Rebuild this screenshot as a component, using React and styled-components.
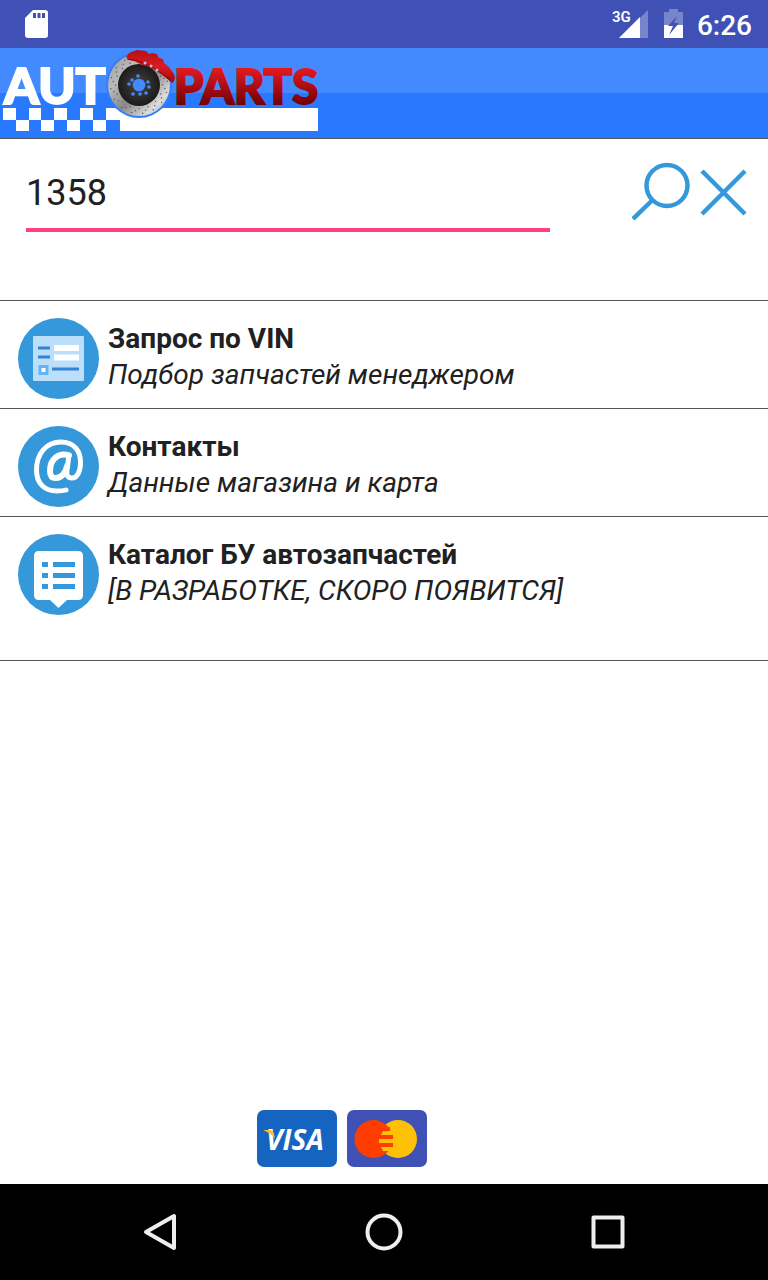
import React, { useState } from "react";
import styled, { createGlobalStyle } from "styled-components";

const GlobalStyle = createGlobalStyle`
  * { box-sizing: border-box; }
  body {
    margin: 0;
    background: #fff;
    color: #212121;
    font-family: Roboto, "Liberation Sans", sans-serif;
  }
`;

const Screen = styled.div`
  display: flex;
  flex-direction: column;
  min-height: 100vh;
`;

const StatusBar = styled.div`
  display: flex;
  align-items: center;
  justify-content: space-between;
  height: 48px;
  padding: 0 16px 0 24px;
  background: #3f51b5;
  color: #fff;
`;

const StatusGroup = styled.div`
  display: flex;
  align-items: center;
  gap: 16px;
`;

const Clock = styled.time`
  font-size: 28px;
  font-weight: 500;
  line-height: 44px;
  margin-left: -2px;
  padding-top: 4px;
`;

const Header = styled.header`
  height: 91px;
  border-bottom: 1px solid #555;
  background: linear-gradient(#448aff 50%, #2979ff 50%);
`;

const Icon = styled.svg`
  display: block;
  flex: none;
`;

const Main = styled.main`
  flex: 1;
  display: flex;
  flex-direction: column;
`;

const SearchForm = styled.form`
  display: flex;
  align-items: flex-start;
  gap: 82px;
  height: 162px;
  padding: 21px 20px 0 26px;
  border-bottom: 1px solid #555;
`;

const SearchInput = styled.input`
  flex: 1;
  min-width: 0;
  height: 72px;
  padding: 0 0 2px;
  border: 0;
  border-bottom: 4px solid #ff4081;
  outline: none;
  background: none;
  color: #212121;
  font: 400 36px/48px Roboto, "Liberation Sans", sans-serif;
`;

const Actions = styled.div`
  display: flex;
  gap: 8px;
`;

const IconButton = styled.button`
  display: flex;
  align-items: center;
  justify-content: center;
  padding: 0;
  border: 0;
  background: none;
  color: #3498db;
  cursor: pointer;
`;

const Menu = styled.ul`
  margin: 0;
  padding: 0;
  list-style: none;
`;

const MenuItem = styled.li`
  border-bottom: 1px solid #555;
  padding-bottom: ${(p) => (p.$tall ? "36px" : "0")};
`;

const MenuLink = styled.a`
  display: flex;
  gap: 9px;
  padding: 17px 18px 9px;
  color: inherit;
  text-decoration: none;
`;

const MenuText = styled.span`
  display: flex;
  flex-direction: column;
  padding-top: 3px;
  font-size: 28px;
  line-height: 36px;
`;

const Title = styled.strong`
  font-weight: 700;
`;

const Subtitle = styled.em`
  font-style: italic;
`;

const Payments = styled.footer`
  display: flex;
  justify-content: center;
  gap: 10px;
  margin-top: auto;
  padding: 24px 84px 17px 0;
`;

const NavBar = styled.nav`
  display: grid;
  grid-template-columns: repeat(3, 1fr);
  height: 96px;
  padding: 0 48px;
  background: #000;
`;

const NavButton = styled(IconButton)`
  color: #eee;
`;

const holes = [
  [138, 28], [148, 34], [132, 32], [129, 36],
  [149, 39], [146, 45], [140, 46], [133, 46],
];

const vents = Array.from({ length: 48 }, (_, i) => {
  const angle = (i / 48) * Math.PI * 2;
  const radius = 23.5 + (i % 3) * 2.5;
  return [139 + Math.cos(angle) * radius, 37 + Math.sin(angle) * radius];
});

function Logo() {
  return (
    <Icon width="320" height="90" viewBox="0 0 320 90" role="img" aria-label="Auto Parts">
      <defs>
        <linearGradient id="red" x1="0" y1="22" x2="0" y2="58" gradientUnits="userSpaceOnUse">
          <stop offset="0" stopColor="#e0181f" />
          <stop offset="1" stopColor="#6c0003" />
        </linearGradient>
        <linearGradient id="steel" x1="0" y1="0" x2="1" y2="1">
          <stop offset="0" stopColor="#999" />
          <stop offset=".3" stopColor="#bbb" />
          <stop offset=".55" stopColor="#888" />
          <stop offset=".8" stopColor="#ddd" />
          <stop offset="1" stopColor="#999" />
        </linearGradient>
        <radialGradient id="hub">
          <stop offset="0" stopColor="#484444" />
          <stop offset="1" stopColor="#1c1a1a" />
        </radialGradient>
        <linearGradient id="caliper" x1="0" y1="0" x2="0" y2="1">
          <stop offset="0" stopColor="#b80f15" />
          <stop offset=".5" stopColor="#d91c22" />
          <stop offset="1" stopColor="#a0070b" />
        </linearGradient>
      </defs>
      <path
        fill="#fff"
        d="M3 60h13v12H3zM29 60h12v12H29zM54 60h13v12H54zM80 60h13v12H80zM16 72h13v11H16zM41 72h13v11H41zM67 72h13v11H67zM93 72h13v11H93zM106 60h212v23H120V72h-14z"
      />
      <g fontFamily='Lato, "Liberation Sans", sans-serif' fontWeight="900" strokeWidth="2">
        <text x="4" y="56" fontSize="50" fill="#fff" stroke="#fff">AUT</text>
        <text x="174" y="56" fontSize="47" fill="url(#red)" stroke="url(#red)">PARTS</text>
      </g>
      <circle cx="139" cy="37" r="33" fill="#2f7fff" />
      <circle cx="139" cy="37" r="31" fill="url(#steel)" />
      {vents.map(([x, y]) => (
        <circle key={`${x}-${y}`} cx={x} cy={y} r=".7" fill="#555" />
      ))}
      <circle cx="139" cy="37" r="21" fill="url(#hub)" />
      <circle cx="139" cy="37" r="6.3" fill="#448aff" />
      {holes.map(([x, y]) => (
        <circle key={`${x}-${y}`} cx={x} cy={y} r="1.8" fill="#448aff" />
      ))}
      <path
        fill="url(#caliper)"
        d="M126 9l3-4 5-2 3-1 9 1 3 3 3-1 5 1 2 4 4 1 1 4 5 4 5 7 1 4-2 5c-5-3-10-8-15-11l-8-5-8-2-8-4-5-1z"
      />
      <path fill="none" stroke="#8a0508" d="M127 11c8 1 13 2 20 6 9 4 16 9 25 17" />
      <g fill="#a9c4ee">
        <circle cx="145" cy="15" r="1.5" />
        <circle cx="151" cy="18" r="1.5" />
        <circle cx="157" cy="22" r="1.5" />
      </g>
    </Icon>
  );
}

function FormIcon() {
  return (
    <Icon width="81" height="81" viewBox="0 0 81 81" aria-hidden="true">
      <circle cx="40.5" cy="40.5" r="40.5" fill="#3498db" />
      <rect x="15" y="18" width="51" height="45" rx="1" fill="#bbdefb" />
      <path fill="#3583d6" d="M20 28.500h12v3H20zM20 37.500h12v3H20zM34 49.500h27v3H34z" />
      <path fill="#fff" d="M36 27h25v6H36zM36 36.500h25v6H36z" />
      <rect x="22" y="48.500" width="7" height="7" fill="#fff" stroke="#64b5f6" strokeWidth="3" />
    </Icon>
  );
}

function ContactIcon() {
  return (
    <Icon width="81" height="81" viewBox="0 0 81 81" aria-hidden="true">
      <circle cx="40.500" cy="40.500" r="40.500" fill="#3498db" />
      <g fill="none" stroke="#fff" strokeLinecap="round">
        <path
          strokeWidth="5"
          d="M48 64C45 65 43 65 39 65C26 65 18.500 57 18.500 44C18.500 28 28 16 43 16C56 16 62.500 25 62.500 36C62.500 46 59 52 54 52C50 52 48 49 49 44L51 29"
        />
        <path strokeWidth="6" d="M51 29.500C41 26 32 33 32 45C32 50 34 52 38 52C44 52 48 46 49 40" />
      </g>
    </Icon>
  );
}

function CatalogIcon() {
  return (
    <Icon width="81" height="81" viewBox="0 0 81 81" aria-hidden="true">
      <circle cx="40.500" cy="40.500" r="40.500" fill="#3498db" />
      <path
        fill="#fff"
        d="M21 17h39q5 0 5 5v39q0 5-5 5H49l-8.500 8L32 66H21q-5 0-5-5V22q0-5 5-5z"
      />
      <path
        fill="#3498db"
        d="M24 28h6v5h-6zM35 28h22v5H35zM24 39h6v5h-6zM35 39h22v5H35zM24 50h6v5h-6zM35 50h22v5H35z"
      />
    </Icon>
  );
}

function VisaCard() {
  return (
    <Icon width="80" height="57" viewBox="0 0 80 57" role="img" aria-label="Visa">
      <rect width="80" height="57" rx="7" fill="#1565c0" />
      <text
        x="9"
        y="40"
        fill="#fff"
        fontFamily='"Open Sans", "Noto Sans", sans-serif'
        fontSize="28"
        fontStyle="italic"
        fontWeight="700"
      >
        VISA
      </text>
      <path fill="#fbc02d" d="M6 20h7q3 0 4 4l1 5q-4-6-12-9z" />
    </Icon>
  );
}

function MasterCard() {
  return (
    <Icon width="80" height="57" viewBox="0 0 80 57" role="img" aria-label="Mastercard">
      <rect width="80" height="57" rx="7" fill="#3f51b5" />
      <circle cx="51" cy="29" r="19" fill="#ffc107" />
      <circle cx="26.500" cy="29" r="19" fill="#ff3d00" />
      <path fill="#ffc107" d="M36 21h9v4H34zM32 29h14v4H32zM34 37h11v4H36z" />
      <path fill="#ff3d00" d="M38 17h5v4h-5zM38 25h8v4h-8zM38 33h8v4h-8z" />
    </Icon>
  );
}

const items = [
  { title: "Запрос по VIN", subtitle: "Подбор запчастей менеджером", Picture: FormIcon },
  { title: "Контакты", subtitle: "Данные магазина и карта", Picture: ContactIcon },
  { title: "Каталог БУ автозапчастей", subtitle: "[В РАЗРАБОТКЕ, СКОРО ПОЯВИТСЯ]", Picture: CatalogIcon, tall: true },
];

export default function App() {
  const [query, setQuery] = useState("1358");

  return (
    <Screen>
      <GlobalStyle />
      <StatusBar>
        <Icon width="24" height="28" viewBox="0 0 24 28" aria-hidden="true">
          <path fill="#fff" d="M9 0h12q3 0 3 3v22q0 3-3 3H4q-3 0-3-3V8z" />
          <path fill="#3f51b5" d="M9 3h3v5H9zM13.500 3h3v5h-3zM18 3h3v5h-3z" />
        </Icon>
        <StatusGroup>
          <Icon width="36" height="30" viewBox="0 0 36 30" role="img" aria-label="3G">
            <path fill="#fff" fillOpacity=".3" d="M36 1v28H7z" />
            <path fill="#fff" d="M28 8v21H7z" />
            <text x="0" y="13" fill="#fff" fontSize="15" fontWeight="600">3G</text>
          </Icon>
          <Icon width="19" height="30" viewBox="0 0 19 30" aria-hidden="true">
            <path fill="#fff" fillOpacity=".3" d="M5 0h9v3h5v13H0V3h5z" />
            <path fill="#fff" d="M0 16h19v13H0z" />
            <path fill="#3f51b5" d="M13 7L4 17h5l-4 9 10-12h-5z" />
          </Icon>
          <Clock>6:26</Clock>
        </StatusGroup>
      </StatusBar>

      <Header>
        <Logo />
      </Header>

      <Main>
        <SearchForm onSubmit={(e) => e.preventDefault()}>
          <SearchInput
            aria-label="Номер детали"
            value={query}
            onChange={(e) => setQuery(e.target.value)}
          />
          <Actions>
            <IconButton type="submit" aria-label="Найти">
              <Icon width="60" height="64" viewBox="0 0 60 64" fill="none" stroke="currentColor" strokeWidth="4.500">
                <circle cx="35" cy="25.500" r="20.500" />
                <path d="M20 40.500L1 59" />
              </Icon>
            </IconButton>
            <IconButton type="button" aria-label="Очистить" onClick={() => setQuery("")}>
              <Icon width="48" height="64" viewBox="0 0 48 64" fill="none" stroke="currentColor" strokeWidth="4.500">
                <path d="M2 11l43 43M45 11L2 54" />
              </Icon>
            </IconButton>
          </Actions>
        </SearchForm>

        <Menu>
          {items.map(({ title, subtitle, Picture, tall }) => (
            <MenuItem key={title} $tall={tall}>
              <MenuLink href="#">
                <Picture />
                <MenuText>
                  <Title>{title}</Title>
                  <Subtitle>{subtitle}</Subtitle>
                </MenuText>
              </MenuLink>
            </MenuItem>
          ))}
        </Menu>

        <Payments>
          <VisaCard />
          <MasterCard />
        </Payments>
      </Main>

      <NavBar>
        <NavButton type="button" aria-label="Назад">
          <Icon width="40" height="40" viewBox="0 0 40 40" fill="none" stroke="currentColor" strokeWidth="4" strokeLinejoin="round">
            <path d="M34 4v32L6 20z" />
          </Icon>
        </NavButton>
        <NavButton type="button" aria-label="Домой">
          <Icon width="40" height="40" viewBox="0 0 40 40" fill="none" stroke="currentColor" strokeWidth="4">
            <circle cx="20" cy="20" r="16.500" />
          </Icon>
        </NavButton>
        <NavButton type="button" aria-label="Недавние">
          <Icon width="40" height="40" viewBox="0 0 40 40" fill="none" stroke="currentColor" strokeWidth="4" strokeLinejoin="round">
            <rect x="5.500" y="5.500" width="29" height="29" />
          </Icon>
        </NavButton>
      </NavBar>
    </Screen>
  );
}
